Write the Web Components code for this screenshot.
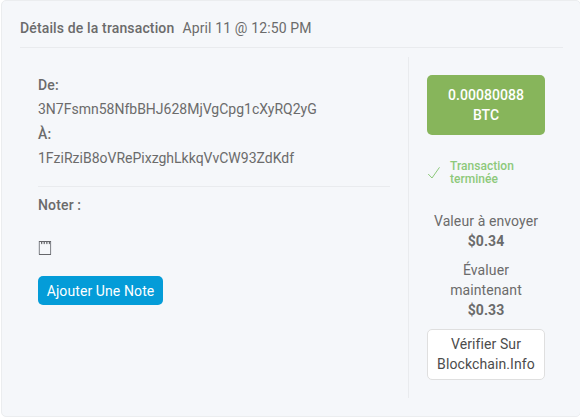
<!DOCTYPE html>
<html lang="fr"><head><meta charset="utf-8"><title>Transaction</title>
<style>html,body{margin:0;background:#fff}body{width:580px;height:419px;overflow:hidden;font:14px/20px Roboto,"Liberation Sans",sans-serif;color:#6b6b6b}</style></head>
<body>
<transaction-card>
<card-header slot="header" label="Détails de la transaction">April 11 @ 12:50 PM</card-header>
<address-list slot="main">
<address-entry label="De:">3N7Fsmn58NfbBHJ628MjVgCpg1cXyRQ2yG</address-entry>
<address-entry label="À:">1FziRziB8oVRePixzghLkkqVvCW93ZdKdf</address-entry>
</address-list>
<note-section slot="main" label="Noter :">Ajouter Une Note</note-section>
<amount-badge slot="side">0.00080088 BTC</amount-badge>
<status-line slot="side">Transaction terminée</status-line>
<value-item slot="side" amount="$0.34">Valeur à envoyer</value-item>
<value-item slot="side" amount="$0.33">Évaluer maintenant</value-item>
<verify-button slot="side">Vérifier Sur Blockchain.Info</verify-button>
</transaction-card>
<script>
function define(name, markup) {
  customElements.define(name, class extends HTMLElement {
    constructor() {
      super();
      this.attachShadow({mode: 'open'}).innerHTML = '<style>*{box-sizing:border-box}:host{display:block;box-sizing:border-box}</style>' + markup;
    }
    connectedCallback() {
      for (const el of this.shadowRoot.querySelectorAll('[data-attr]'))
        el.textContent = this.getAttribute(el.dataset.attr);
    }
  });
}
define('transaction-card', `<style>
:host{margin-left:1px;width:580px;height:417px;border:1px solid #ebedef;border-radius:5px;background:#f5f7fa;padding:0 17px 0 18px}
.body{display:grid;grid-template-columns:388px 1fr;margin-top:9px;height:341px}
main{padding:16px 18px 0 18px}
aside{border-left:1px solid #e9ebee;padding:18px 18px 0 18px;letter-spacing:.1px}
</style><slot name="header"></slot><div class="body"><main><slot name="main"></slot></main><aside><slot name="side"></slot></aside></div>`);
define('card-header', `<style>
:host{height:47px;padding-top:17px;border-bottom:1px solid #e9ebee;white-space:nowrap;letter-spacing:.14px}
b{font-weight:500;margin-right:8px}
</style><b data-attr="label"></b><slot></slot>`);
define('address-list', `<style>:host{border-bottom:1px solid #e9ebee;height:114px}</style><slot></slot>`);
define('address-entry', `<style>:host{line-height:24px;height:49px}b{display:block;font-weight:500;letter-spacing:.15px}</style><b data-attr="label"></b><slot></slot>`);
define('note-section', `<style>
:host{padding-top:8px}
b{display:block;font-weight:500;letter-spacing:.15px}
svg{display:block;margin:25px 0 20px}
button{display:block;height:29px;width:125px;padding:0;border:0;border-radius:5px;background:#049cd8;color:#fff;font:inherit;letter-spacing:.1px}
</style><b data-attr="label"></b>
<svg width="14" height="16" viewBox="0 0 14 16" fill="none"><path d="M1.3 1v13.5M12.6 1v13.5" stroke="#7e8086"/><path d="M1 14.5h12" stroke="#66676b"/><path d="M1 1.5h12" stroke="#66676b"/><path d="M3 2.5h9M3 3.6h9" stroke="#66676b" stroke-dasharray="1.3 1.3"/></svg>
<button><slot></slot></button>`);
define('amount-badge', `<style>:host{height:60px;padding:10px 16px;border-radius:5px;background:#87b55b;color:#fff;font-weight:500;text-align:center;letter-spacing:.03px}</style><slot></slot>`);
define('status-line', `<style>
:host{display:flex;align-items:center;gap:9px;margin-top:25px;height:26px;font-size:12px;line-height:13px;font-weight:500;color:#8dc97a;letter-spacing:.03px}
svg{flex:none}
</style><svg width="14" height="14" viewBox="0 0 14 14" fill="none" stroke="#8dc97a"><path d="M1.2 8L5 12L12.5 1.3"/></svg><span><slot></slot></span>`);
define('value-item', `<style>:host{margin:25px -4px 0;text-align:center}:host([amount="$0.33"]){margin-top:9px;padding:0 16px}b{display:block;font-weight:700}</style><slot></slot><b data-attr="amount"></b>`);
define('verify-button', `<style>
:host{margin-top:9px}
button{width:100%;height:51px;padding:4px 6px;background:#fff;border:1px solid #dfdfdf;border-radius:5px;font:inherit;letter-spacing:inherit;color:#4c4c4c}
slot{display:block;position:relative;top:-.5px}
</style><button><slot></slot></button>`);
</script>
</body></html>
